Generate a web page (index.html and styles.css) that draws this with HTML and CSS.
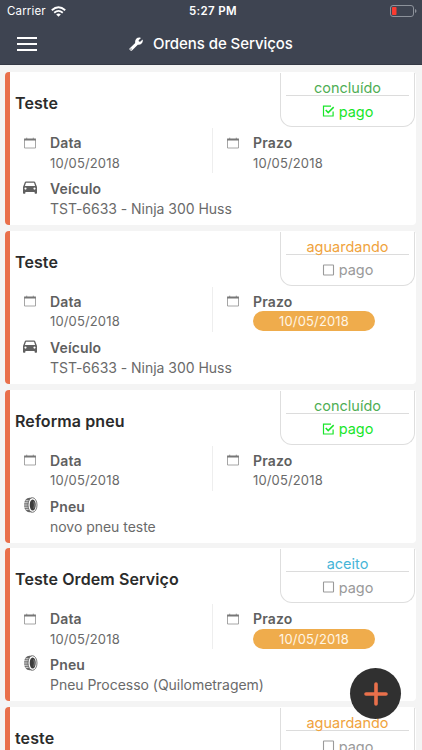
FILE: index.html
```html
<!DOCTYPE html>
<html lang="pt-BR">
<head>
<meta charset="utf-8">
<title>Ordens de Serviços</title>
<link rel="stylesheet" href="styles.css">
</head>
<body>
<svg class="defs" aria-hidden="true">
  <symbol id="cal" viewBox="0 0 12 12"><path d="M.5 2.500v8.500h11V2.500" fill="none" stroke="#8f8f8f" stroke-width=".8"/><path d="M.1 1.500h11.800v2H.1z" fill="#777"/><path d="M2.700.7v1.200M9.300.7v1.200" stroke="#777" stroke-width=".8"/></symbol>
  <symbol id="car" viewBox="0 0 14 13"><path fill="#606060" fill-rule="evenodd" d="M3 .5h8q1 0 1.300.9L14 6v6q0 .7-.7.7h-1q-.7 0-.7-.7v-1H2.400v1q0 .7-.7.700h-1Q0 12.700 0 12V6l1.700-4.600Q2 .5 3 .5zM3 1.800 1.900 5h10.200L11 1.800zM2.500 6.500a1.100 1.100 0 1 0 0 2.200 1.100 1.100 0 0 0 0-2.200zm9 0a1.100 1.100 0 1 0 0 2.200 1.100 1.100 0 0 0 0-2.200z"/></symbol>
  <symbol id="tire" viewBox="0 0 14 16"><path d="M8.500.8H6C2.800.8.500 4 .5 8s2.300 7.200 5.500 7.200h2.500z" fill="#666"/><path d="M2 3.800h4M.5 5.800h4.500M.3 8h4.500M.5 10.200h4.500M2 12.300h4" stroke="#fff" stroke-width=".8"/><ellipse cx="9" cy="8" rx="4.500" ry="7.300" fill="#fff" stroke="#555" stroke-width=".8"/><ellipse cx="9.200" cy="8" rx="3" ry="5.600" fill="#3c3c3c"/><path d="M10.300 4.500q1.300 3.500 0 7" fill="none" stroke="#aaa" stroke-width=".6"/></symbol>
  <symbol id="box" viewBox="0 0 12 12"><rect x="1" y="1" width="10" height="10" rx=".5" fill="none" stroke="currentColor" stroke-width="1.100"/></symbol>
  <symbol id="check" viewBox="0 0 12 12"><path d="M8.500 1.200H1v9.800h9.600V6.500" fill="none" stroke="currentColor" stroke-width="1.200"/><path d="m3.200 5 2.500 2.600 5.500-5.500" fill="none" stroke="currentColor" stroke-width="1.500"/></symbol>
</svg>
<div class="screen">
  <header>
    <div class="status">
      <span class="carrier">Carrier</span>
      <svg class="wifi" viewBox="0 0 15 11"><path d="M.8 4.200Q7.500-1.700 14.200 4.200" fill="none" stroke="#fff" stroke-width="1.900"/><path d="M3.200 6.700q4.300-3.700 8.600 0" fill="none" stroke="#fff" stroke-width="1.800"/><path d="M5.200 8.500q2.300-1.900 4.600 0L7.500 10.800z" fill="#fff"/></svg>
      <span class="time">5:27 PM</span>
      <svg class="battery" viewBox="0 0 27 12"><rect x=".5" y=".5" width="23" height="11" rx="2.500" fill="none" stroke="#8d929b"/><rect x="2" y="2" width="4.500" height="8" rx=".7" fill="#fb3b30"/><path d="M25 4q1.500.6 1.500 2T25 8z" fill="#8d929b"/></svg>
    </div>
    <div class="nav">
      <div class="menu"><i></i><i></i><i></i></div>
      <svg class="wrench" viewBox="0 0 14 14"><path fill="#fff" fill-rule="evenodd" d="M.5 11.500 6.200 6C5.600 3 7.500.4 10.800.6L12 1 9.600 3.200l.3 1.300 1.300.2 2.400-2.300c.9 3-1.200 5.800-4.800 5.400L3 13.500q-.8.700-1.500 0l-1-.9q-.4-.5 0-1.100zM2 11.400a.7.700 0 1 0 .7.700.7.700 0 0 0-.7-.7z"/></svg>
      <h1>Ordens de Serviços</h1>
    </div>
  </header>
  <main>
    <article class="card">
      <div class="badge"><div class="state green">concluído</div><div class="paid yes"><svg><use href="#check"/></svg><span>pago</span></div></div>
      <h2>Teste</h2>
      <div class="dates">
        <div class="field"><svg class="cal"><use href="#cal"/></svg><b>Data</b><span class="date">10/05/2018</span></div>
        <div class="field"><svg class="cal"><use href="#cal"/></svg><b>Prazo</b><span class="date">10/05/2018</span></div>
      </div>
      <div class="field item"><svg class="car"><use href="#car"/></svg><b>Veículo</b><span>TST-6633 - Ninja 300 Huss</span></div>
    </article>
    <article class="card">
      <div class="badge"><div class="state orange">aguardando</div><div class="paid"><svg><use href="#box"/></svg><span>pago</span></div></div>
      <h2>Teste</h2>
      <div class="dates">
        <div class="field"><svg class="cal"><use href="#cal"/></svg><b>Data</b><span class="date">10/05/2018</span></div>
        <div class="field"><svg class="cal"><use href="#cal"/></svg><b>Prazo</b><span class="date late">10/05/2018</span></div>
      </div>
      <div class="field item"><svg class="car"><use href="#car"/></svg><b>Veículo</b><span>TST-6633 - Ninja 300 Huss</span></div>
    </article>
    <article class="card">
      <div class="badge"><div class="state green">concluído</div><div class="paid yes"><svg><use href="#check"/></svg><span>pago</span></div></div>
      <h2>Reforma pneu</h2>
      <div class="dates">
        <div class="field"><svg class="cal"><use href="#cal"/></svg><b>Data</b><span class="date">10/05/2018</span></div>
        <div class="field"><svg class="cal"><use href="#cal"/></svg><b>Prazo</b><span class="date">10/05/2018</span></div>
      </div>
      <div class="field item"><svg class="tire"><use href="#tire"/></svg><b>Pneu</b><span>novo pneu teste</span></div>
    </article>
    <article class="card">
      <div class="badge"><div class="state blue">aceito</div><div class="paid"><svg><use href="#box"/></svg><span>pago</span></div></div>
      <h2>Teste Ordem Serviço</h2>
      <div class="dates">
        <div class="field"><svg class="cal"><use href="#cal"/></svg><b>Data</b><span class="date">10/05/2018</span></div>
        <div class="field"><svg class="cal"><use href="#cal"/></svg><b>Prazo</b><span class="date late">10/05/2018</span></div>
      </div>
      <div class="field item"><svg class="tire"><use href="#tire"/></svg><b>Pneu</b><span>Pneu Processo (Quilometragem)</span></div>
    </article>
    <article class="card">
      <div class="badge"><div class="state orange">aguardando</div><div class="paid"><svg><use href="#box"/></svg><span>pago</span></div></div>
      <h2>teste</h2>
    </article>
  </main>
  <button class="fab" aria-label="Adicionar"><svg viewBox="0 0 24 24"><path d="M12 2v20M2 12h20" stroke="#e9704b" stroke-width="3.600" stroke-linecap="round"/></svg></button>
</div>
</body>
</html>
```
FILE: styles.css
```css
* { box-sizing: border-box; }
body { margin: 0; font-family: Inter, "Liberation Sans", sans-serif; color: #6a6a6a; }
.defs { position: absolute; width: 0; height: 0; }
.screen { position: relative; width: 422px; height: 750px; overflow: hidden; background: #f4f4f4; }
header { height: 65px; background: #3e4451; color: #fff; border-bottom: 1px solid #343945; }
.status { display: grid; grid-template-columns: 44px 140px 58px 1fr; height: 22px; padding: 0 5px 0 7px; align-items: center; font-size: 12px; }
.carrier { font-size: 11.5px; letter-spacing: .15px; }
.wifi { width: 15px; height: 11px; }
.time { font-size: 11.5px; font-weight: 600; letter-spacing: .35px; white-space: nowrap; margin-left: -2px; }
.battery { width: 27px; height: 12px; justify-self: end; }
.nav { display: flex; align-items: center; height: 43px; padding-left: 17px; }
.menu { display: flex; flex-direction: column; gap: 4px; width: 20px; }
.menu i { height: 2px; background: #fff; }
.wrench { width: 14px; height: 14px; margin: 0 10px 0 92px; }
h1 { margin: 0; font-size: 15px; font-weight: 500; line-height: 20px; letter-spacing: -.07px; white-space: nowrap; }
main { display: flex; flex-direction: column; gap: 5.800px; padding: 7px 6px 0 5px; }
.card { position: relative; flex: none; height: 153px; background: #fff; border-left: 5px solid #e9704b; border-radius: 4px; padding: 21px 0 0 5px; }
h2 { margin: 0; height: 20px; line-height: 20px; font-size: 16px; font-weight: 600; letter-spacing: .1px; color: #2b2b2b; white-space: nowrap; }
.badge { position: absolute; right: 1px; top: 1px; width: 135px; height: 54px; border: 1px solid #dedede; border-top: 0; border-radius: 0 0 12px 12px; padding: 5px 5px 0 5px; font-size: 14.500px; background: #fff; }
.state { height: 18px; line-height: 20px; text-align: center; border-bottom: 1px solid #dcdcdc; }
.green { color: #4fae55; }
.orange { color: #f0a33d; }
.blue { color: #46b5d8; }
.paid { display: flex; justify-content: center; align-items: center; gap: 4px; height: 30px; color: #9a9a9a; }
.paid svg { width: 13px; height: 12px; }
.paid.yes { color: #19e62a; }
.dates { display: grid; grid-template-columns: 197px 1fr; height: 45px; margin-top: 15px; }
.dates .field + .field { border-left: 1px solid #eee; padding-left: 14px; grid-template-columns: 26px 1fr; }
.field { display: grid; grid-template-columns: 35px 1fr; grid-template-rows: 20px 20px; padding: 4.500px 0 0 0; align-items: center; font-size: 14px; white-space: nowrap; }
.field svg { grid-row: 1; grid-column: 1; }
.field b { font-weight: 600; font-size: 14px; letter-spacing: .15px; grid-column: 2; color: #5f5f5f; }
.field span { grid-column: 2; grid-row: 2; letter-spacing: -.03px; }
.field .date { font-size: 13px; letter-spacing: .14px; }
.cal { width: 12px; height: 12px; margin-left: 9px; }
.dates .field + .field .cal { margin-left: 0; }
.field .late { width: 122px; height: 20px; line-height: 20px; border-radius: 10px; background: #efac4c; color: #fff5e4; text-align: center; }
.item { padding-top: 5.500px; }
.car { width: 14px; height: 13px; margin: -2px 0 0 8px; }
.tire { width: 15px; height: 16px; margin: -3px 0 0 8px; }
.fab { position: absolute; left: 350px; top: 668px; width: 51px; height: 51px; border: 0; border-radius: 50%; background: #303030; display: grid; place-items: center; padding: 0; }
.fab svg { width: 24px; height: 24px; }
```
